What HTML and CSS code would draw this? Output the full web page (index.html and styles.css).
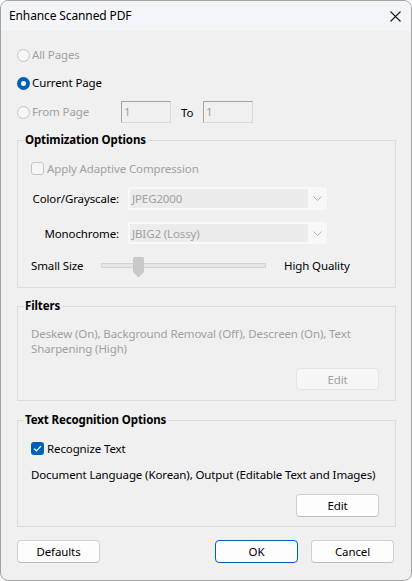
FILE: index.html
```html
<!DOCTYPE html>
<html>
<head>
<meta charset="utf-8">
<link rel="stylesheet" href="styles.css">
</head>
<body>
<div class="window">
  <div class="titlebar">
    <span class="title">Enhance Scanned PDF</span>
    <svg class="close" width="11" height="11" viewBox="0 0 11 11"><path d="M0.5 0.5 L10.5 10.5 M10.5 0.5 L0.5 10.5" stroke="#1a1a1a" stroke-width="1.1" fill="none"/></svg>
  </div>
  <div class="content">
    <div class="pages">
      <div class="radio-row disabled"><span class="radio"></span><span class="rlabel">All Pages</span></div>
      <div class="radio-row"><span class="radio checked"></span><span class="rlabel">Current Page</span></div>
      <div class="radio-row disabled from-row"><span class="radio"></span><span class="rlabel from-label">From Page</span><span class="numbox">1</span><span class="to">To</span><span class="numbox">1</span></div>
    </div>

    <fieldset class="group opt">
      <legend>Optimization Options</legend>
      <div class="opt-inner">
        <div class="chk-row disabled"><span class="chk"></span><span>Apply Adaptive Compression</span></div>
        <div class="field-row color-row"><span class="flabel">Color/Grayscale:</span><div class="combo"><span class="combo-text">JPEG2000</span><span class="combo-arrow"><svg width="9" height="5" viewBox="0 0 9 5"><path d="M0.5 0.5 L4.5 4.5 L8.5 0.5" stroke="#b5b5b5" fill="none"/></svg></span></div></div>
        <div class="field-row mono-row"><span class="flabel">Monochrome:</span><div class="combo"><span class="combo-text">JBIG2 (Lossy)</span><span class="combo-arrow"><svg width="9" height="5" viewBox="0 0 9 5"><path d="M0.5 0.5 L4.5 4.5 L8.5 0.5" stroke="#b5b5b5" fill="none"/></svg></span></div></div>
        <div class="slider-row"><span class="slabel">Small Size</span><div class="track"><svg class="thumb" width="11" height="21" viewBox="0 0 11 21"><path d="M0 1.5 Q0 0 1.5 0 L9.5 0 Q11 0 11 1.5 L11 15 L5.5 20.5 L0 15 Z" fill="#c9c9c9"/></svg></div><span class="hlabel">High Quality</span></div>
      </div>
    </fieldset>

    <fieldset class="group filters">
      <legend>Filters</legend>
      <div class="filters-inner">
        <div class="ftext">Deskew (On), Background Removal (Off), Descreen (On), Text<br>Sharpening (High)</div>
        <div class="btn-line"><button class="btn disabled-btn">Edit</button></div>
      </div>
    </fieldset>

    <fieldset class="group tro">
      <legend>Text Recognition Options</legend>
      <div class="tro-inner">
        <div class="chk-row2"><span class="chk checked"><svg width="9" height="7" viewBox="0 0 9 7"><path d="M1 3.6 L3.4 6 L8 1" stroke="#fff" stroke-width="1.2" fill="none"/></svg></span><span>Recognize Text</span></div>
        <div class="doc">Document Language (Korean), Output (Editable Text and Images)</div>
        <div class="btn-line2"><button class="btn">Edit</button></div>
      </div>
    </fieldset>

    <div class="footer">
      <button class="btn">Defaults</button>
      <div class="spacer"></div>
      <button class="btn ok">OK</button>
      <button class="btn">Cancel</button>
    </div>
  </div>
</div>
</body>
</html>
```

FILE: styles.css
```css
* { box-sizing: border-box; }
html, body { margin: 0; padding: 0; background: #ffffff; }
body {
  font-family: "Noto Sans", "Open Sans", sans-serif;
  font-size: 11.5px;
  letter-spacing: -0.12px;
  color: #000;
}
.window {
  width: 412px;
  height: 581px;
  border: 1px solid #a3a3a3;
  border-radius: 8px;
  background: #f0f0f0;
  overflow: hidden;
  display: flex;
  flex-direction: column;
}
.titlebar {
  height: 30px;
  flex: none;
  background: #f3f5f8;
  display: flex;
  align-items: center;
  justify-content: space-between;
  padding: 0 10px 0 8px;
}
.title { font-size: 12px; line-height: 16px; }
.close { display: block; margin-top: 1px; }

.content {
  padding: 0 15px 0 16px;
  display: flex;
  flex-direction: column;
}
.pages { padding-top: 10px; padding-left: 0; }
.radio-row {
  height: 28px;
  display: flex;
  align-items: center;
}
.from-row { height: 30px; }
.radio {
  width: 13px;
  height: 13px;
  border-radius: 50%;
  border: 1px solid #c4c4c4;
  background: #f6f6f6;
  flex: none;
  margin-right: 2px;
}
.radio.checked {
  border: none;
  background: #005fb8;
  position: relative;
}
.radio.checked::after {
  content: "";
  position: absolute;
  left: 4px; top: 4px;
  width: 5px; height: 5px;
  border-radius: 50%;
  background: #fff;
}
.disabled { color: #a0a0a0; }
.rlabel { line-height: 16px; }
.from-label { width: 89px; }
.numbox {
  width: 50px;
  height: 22px;
  border-top: 1px solid #a4a4a4;
  border-left: 1px solid #a4a4a4;
  border-right: 1px solid #dadada;
  border-bottom: 1px solid #dadada;
  background: #f0f0f0;
  color: #a0a0a0;
  padding-left: 2px;
  display: flex;
  align-items: center;
  margin-top: -1px;
}
.to { color: #000; width: 32px; padding-left: 10px; }

.group {
  margin: 0;
  padding: 0;
  border: 1px solid #dcdcdc;
  min-width: 0;
}
.group legend {
  font-weight: bold;
  line-height: 16px;
  padding: 0 2px 0 1px;
  margin-left: 6px;
}
.opt { margin-top: 5px; }
.opt-inner { padding: 8px 0 12px 13px; }
.chk-row { height: 24px; display: flex; align-items: center; }
.chk {
  width: 13px; height: 13px;
  border: 1px solid #c6c6c6;
  border-radius: 3px;
  background: #f6f6f6;
  margin-right: 3px;
  flex: none;
  display: flex; align-items: center; justify-content: center;
}
.chk.checked { border: none; background: #005fb8; }
.field-row { display: flex; align-items: center; }
.color-row { margin-top: 7px; height: 23px; }
.mono-row { margin-top: 12px; height: 22px; }
.flabel { width: 88px; text-align: right; margin-right: 9px; white-space: nowrap; }
.combo {
  width: 199px;
  height: 100%;
  background: #f8f8f8;
  border-radius: 3px;
  display: flex;
  padding: 2px 0 2px 2px;
}
.combo-text {
  flex: 1;
  background: #ececec;
  color: #a0a0a0;
  padding-left: 2px;
  display: flex;
  align-items: center;
}
.combo-arrow {
  width: 19px;
  display: flex; align-items: center; justify-content: center;
}
.slider-row { margin-top: 11px; height: 20px; display: flex; align-items: center; }
.slabel { width: 70px; }
.track {
  width: 165px;
  height: 5px;
  border: 1px solid #d4d4d4;
  background: #e6e6e6;
  position: relative;
  margin-right: 18px;
}
.thumb { position: absolute; left: 31px; top: -7px; }
.hlabel { white-space: nowrap; }

.filters { margin-top: 10px; }
.filters-inner { padding: 12px 16px 10px 13px; }
.ftext { color: #a0a0a0; line-height: 15px; white-space: nowrap; }
.btn-line { display: flex; justify-content: flex-end; margin-top: 12px; }
.btn {
  width: 83px;
  height: 22px;
  font: inherit;
  letter-spacing: inherit;
  color: #000;
  background: #fdfdfd;
  border: 1px solid #d0d0d0;
  border-bottom-color: #bdbdbd;
  border-radius: 4px;
  padding: 0;
}
.disabled-btn { background: #f6f6f6; border-color: #e4e4e4; color: #a0a0a0; }

.tro { margin-top: 11px; }
.tro-inner { padding: 10px 16px 9px 13px; }
.chk-row2 { height: 20px; display: flex; align-items: center; }
.doc { margin-top: 9px; line-height: 16px; white-space: nowrap; }
.btn-line2 { display: flex; justify-content: flex-end; margin-top: 11px; }
.btn-line2 .btn { height: 23px; }

.footer { display: flex; margin-top: 13px; padding-right: 2px; gap: 13px; }
.footer .btn { height: 23px; }
.spacer { flex: 1; }
.ok { border: 1px solid #005fb8; }
```
